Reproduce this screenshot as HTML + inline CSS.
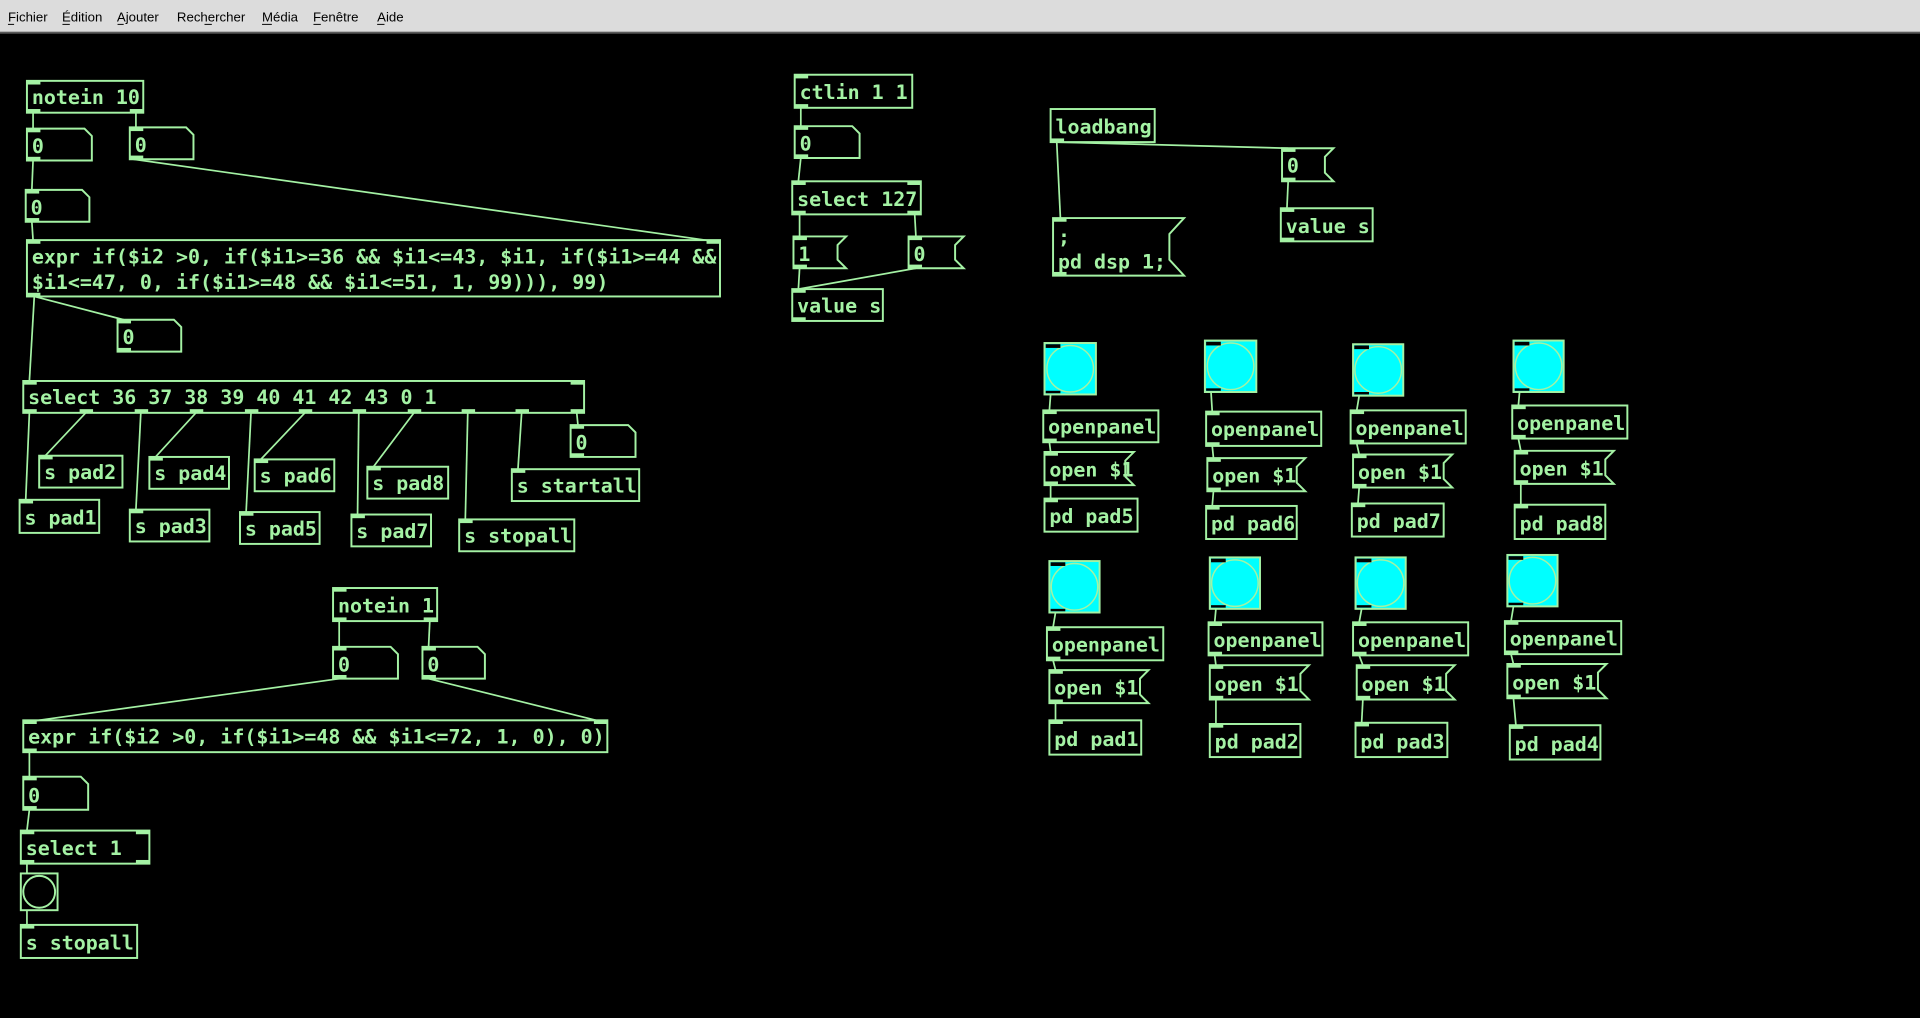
<!DOCTYPE html>
<html><head><meta charset="utf-8"><style>
html,body{margin:0;padding:0;background:#000;width:1920px;height:1018px;overflow:hidden}
svg{display:block}
.o{fill:none;stroke:#a4f2a4;stroke-width:1.6}
.c{fill:none;stroke:#a4f2a4;stroke-width:1.4}
.f{fill:#a4f2a4}
.t{fill:#a4f2a4;font-family:"DejaVu Sans Mono","Liberation Mono",monospace;font-weight:bold;font-size:16.3px}
.m{fill:#000;font-family:"Liberation Sans","DejaVu Sans",sans-serif;font-size:10.8px}
.bg{fill:#00ffff;stroke:#a4f2a4;stroke-width:1.6}
</style></head><body>
<svg width="1920" height="1018" viewBox="0 0 1568 831" preserveAspectRatio="none">
<rect x="0" y="0" width="1568" height="831" fill="#000"/>
<rect x="0" y="0" width="1568" height="26" fill="#dcdcdc"/>
<rect x="0" y="26" width="1568" height="1.5" fill="#5a5a5a"/>
<g class="m">
<text x="6.5" y="17.5">Fichier</text><text x="50.6" y="17.5">Édition</text><text x="95.5" y="17.5">Ajouter</text><text x="144.5" y="17.5">Rechercher</text><text x="214" y="17.5">Média</text><text x="255.6" y="17.5">Fenêtre</text><text x="308" y="17.5">Aide</text>
</g>
<g fill="#000"><rect x="6.5" y="19.5" width="5" height="0.8"/><rect x="51" y="19.5" width="6" height="0.8"/><rect x="96" y="19.5" width="5" height="0.8"/><rect x="167" y="19.5" width="6" height="0.8"/><rect x="214" y="19.5" width="8" height="0.8"/><rect x="256" y="19.5" width="6" height="0.8"/><rect x="308" y="19.5" width="6" height="0.8"/></g>

<g class="c">
<line x1="27" y1="92" x2="27" y2="105"/><line x1="111" y1="92" x2="111" y2="104"/>
<line x1="27" y1="131" x2="26" y2="155"/><line x1="26" y1="181" x2="27" y2="196"/>
<line x1="109" y1="130" x2="583" y2="197"/>
<line x1="28" y1="242" x2="101" y2="261"/><line x1="28" y1="242" x2="24" y2="311"/>
<line x1="24" y1="337" x2="21" y2="408"/><line x1="70" y1="337" x2="37" y2="372"/>
<line x1="115" y1="337" x2="111" y2="416"/><line x1="160" y1="337" x2="127" y2="373"/>
<line x1="205" y1="337" x2="201" y2="418"/><line x1="249" y1="337" x2="213" y2="375"/>
<line x1="293" y1="337" x2="292" y2="420"/><line x1="338" y1="337" x2="305" y2="381"/>
<line x1="382" y1="337" x2="380" y2="424"/><line x1="426" y1="337" x2="423" y2="383"/>
<line x1="471" y1="337" x2="472" y2="347"/>
<line x1="277" y1="507" x2="277" y2="528"/><line x1="351" y1="507" x2="350" y2="528"/>
<line x1="277" y1="554" x2="24" y2="589"/><line x1="350" y1="554" x2="491" y2="589"/>
<line x1="24" y1="614" x2="24" y2="634"/><line x1="24" y1="661" x2="22" y2="678"/>
<line x1="22" y1="705" x2="22" y2="713"/><line x1="22" y1="743" x2="22" y2="755"/>
<line x1="654" y1="88" x2="654" y2="103"/><line x1="654" y1="129" x2="652" y2="148"/>
<line x1="653" y1="175" x2="653" y2="193"/><line x1="747" y1="175" x2="748" y2="193"/>
<line x1="653" y1="219" x2="652" y2="236"/><line x1="748" y1="219" x2="652" y2="236"/>
<line x1="863" y1="116" x2="866" y2="178"/><line x1="863" y1="116" x2="1052" y2="121"/>
<line x1="1052" y1="148" x2="1051" y2="170"/>
<line x1="858" y1="322" x2="857" y2="335"/><line x1="857" y1="361" x2="858" y2="369"/><line x1="858" y1="396" x2="858" y2="407"/>
<line x1="989" y1="320" x2="990" y2="336"/><line x1="990" y1="364" x2="991" y2="374"/><line x1="991" y1="401" x2="990" y2="413"/>
<line x1="1110" y1="323" x2="1108" y2="335"/><line x1="1108" y1="362" x2="1110" y2="371"/><line x1="1110" y1="398" x2="1109" y2="411"/>
<line x1="1241" y1="320" x2="1240" y2="331"/><line x1="1240" y1="358" x2="1242" y2="368"/><line x1="1242" y1="395" x2="1242" y2="412"/>
<line x1="862" y1="500" x2="860" y2="512"/><line x1="860" y1="539" x2="862" y2="547"/><line x1="862" y1="574" x2="862" y2="588"/>
<line x1="993" y1="497" x2="992" y2="508"/><line x1="992" y1="535" x2="993" y2="543"/><line x1="993" y1="571" x2="993" y2="591"/>
<line x1="1112" y1="497" x2="1110" y2="508"/><line x1="1110" y1="535" x2="1113" y2="543"/><line x1="1113" y1="571" x2="1112" y2="590"/>
<line x1="1236" y1="495" x2="1234" y2="507"/><line x1="1234" y1="534" x2="1236" y2="542"/><line x1="1236" y1="570" x2="1238" y2="592"/>
</g>

<g class="o">
<rect x="22" y="66" width="95" height="26"/>
<rect x="22" y="196" width="566" height="46"/>
<rect x="19" y="311" width="458" height="26"/>
<rect x="32" y="372" width="68" height="26"/><rect x="122" y="373" width="65" height="26"/><rect x="208" y="375" width="65" height="26"/><rect x="300" y="381" width="66" height="26"/><rect x="418" y="383" width="104" height="26"/>
<rect x="16" y="408" width="65" height="27"/><rect x="106" y="416" width="65" height="26"/><rect x="196" y="418" width="65" height="26"/><rect x="287" y="420" width="65" height="26"/><rect x="375" y="424" width="94" height="26"/>
<rect x="272" y="480" width="85" height="27"/>
<rect x="19" y="588" width="477" height="26"/>
<rect x="17" y="678" width="105" height="27"/>
<rect x="17" y="713" width="30" height="30"/>
<circle cx="32" cy="728" r="13"/>
<rect x="17" y="755" width="95" height="27"/>
<rect x="649" y="61" width="96" height="27"/>
<rect x="647" y="148" width="105" height="27"/>
<rect x="647" y="236" width="74" height="26"/>
<rect x="858" y="89" width="85" height="27"/>
<rect x="1046" y="170" width="75" height="27"/>
<path d="M22,105H69L75,111V131H22Z"/><path d="M106,104H152L158,110V130H106Z"/><path d="M21,155H67L73,161V181H21Z"/>
<path d="M96,261H142L148,267V287H96Z"/><path d="M466,347H513L519,353V373H466Z"/>
<path d="M272,528H319L325,534V554H272Z"/><path d="M345,528H390L396,534V554H345Z"/>
<path d="M19,634H66L72,640V661H19Z"/><path d="M649,103H696L702,109V129H649Z"/>
<path d="M648,193H691L684,200V212L691,219H648Z"/><path d="M742,193H787L780,200V212L787,219H742Z"/>
<path d="M1047,121H1089L1082,128V141L1089,148H1047Z"/>
<path d="M860,178H967L955,191V212L967,225H860Z"/>
</g>
<g>
<rect class="bg" x="853" y="280" width="42" height="42"/><rect class="bg" x="984" y="278" width="42" height="42"/><rect class="bg" x="1105" y="281" width="41" height="42"/><rect class="bg" x="1236" y="278" width="41" height="42"/>
<rect class="bg" x="857" y="458" width="41" height="42"/><rect class="bg" x="988" y="455" width="41" height="42"/><rect class="bg" x="1107" y="455" width="41" height="42"/><rect class="bg" x="1231" y="453" width="41" height="42"/>
</g>
<g fill="none" stroke="#a4f2a4" stroke-width="1.2">
<circle cx="874" cy="301" r="19"/><circle cx="1005" cy="299" r="19"/><circle cx="1125.5" cy="302" r="19"/><circle cx="1256.5" cy="299" r="19"/>
<circle cx="877.5" cy="479" r="19"/><circle cx="1008.5" cy="476" r="19"/><circle cx="1127.5" cy="476" r="19"/><circle cx="1251.5" cy="474" r="19"/>
</g>
<g fill="#000">
<rect x="854" y="281" width="12" height="3"/><rect x="854" y="319" width="12" height="2"/>
<rect x="985" y="279" width="12" height="3"/><rect x="985" y="317" width="12" height="2"/>
<rect x="1106" y="282" width="12" height="3"/><rect x="1106" y="320" width="12" height="2"/>
<rect x="1237" y="279" width="12" height="3"/><rect x="1237" y="317" width="12" height="2"/>
<rect x="858" y="459" width="12" height="3"/><rect x="858" y="497" width="12" height="2"/>
<rect x="989" y="456" width="12" height="3"/><rect x="989" y="494" width="12" height="2"/>
<rect x="1108" y="456" width="12" height="3"/><rect x="1108" y="494" width="12" height="2"/>
<rect x="1232" y="454" width="12" height="3"/><rect x="1232" y="492" width="12" height="2"/>
</g>
<g class="o">
<rect x="852" y="335" width="94" height="26"/><path d="M853,369H926L919,376V389L926,396H853Z"/><rect x="853" y="407" width="76" height="27"/>
<rect x="985" y="336" width="94" height="28"/><path d="M986,374H1066L1059,381V394L1066,401H986Z"/><rect x="985" y="413" width="74" height="27"/>
<rect x="1103" y="335" width="94" height="27"/><path d="M1105,371H1186L1179,378V391L1186,398H1105Z"/><rect x="1104" y="411" width="75" height="27"/>
<rect x="1235" y="331" width="94" height="27"/><path d="M1237,368H1318L1311,375V388L1318,395H1237Z"/><rect x="1237" y="412" width="74" height="28"/>
<rect x="855" y="512" width="95" height="27"/><path d="M857,547H938L931,554V567L938,574H857Z"/><rect x="857" y="588" width="75" height="28"/>
<rect x="987" y="508" width="93" height="27"/><path d="M988,543H1069L1062,550V564L1069,571H988Z"/><rect x="988" y="591" width="74" height="27"/>
<rect x="1105" y="508" width="94" height="27"/><path d="M1108,543H1188L1181,550V564L1188,571H1108Z"/><rect x="1107" y="590" width="75" height="28"/>
<rect x="1229" y="507" width="95" height="27"/><path d="M1231,542H1312L1305,549V563L1312,570H1231Z"/><rect x="1233" y="592" width="74" height="28"/>
</g>

<g class="f">
<rect x="22" y="66" width="11" height="3"/><rect x="22" y="89" width="11" height="3"/><rect x="106" y="89" width="11" height="3"/>
<rect x="22" y="105" width="11" height="3"/><rect x="22" y="128" width="11" height="3"/><rect x="106" y="104" width="11" height="3"/><rect x="106" y="127" width="11" height="3"/>
<rect x="21" y="155" width="11" height="3"/><rect x="21" y="178" width="11" height="3"/>
<rect x="22" y="196" width="11" height="3"/><rect x="577" y="196" width="11" height="3"/><rect x="22" y="239" width="11" height="3"/>
<rect x="96" y="261" width="11" height="3"/><rect x="96" y="284" width="11" height="3"/>
<rect x="19" y="311" width="11" height="3"/><rect x="466" y="311" width="11" height="3"/>
<rect x="19" y="334" width="11" height="3"/><rect x="65" y="334" width="11" height="3"/><rect x="110" y="334" width="11" height="3"/><rect x="155" y="334" width="11" height="3"/><rect x="200" y="334" width="11" height="3"/><rect x="244" y="334" width="11" height="3"/><rect x="288" y="334" width="11" height="3"/><rect x="333" y="334" width="11" height="3"/><rect x="377" y="334" width="11" height="3"/><rect x="421" y="334" width="11" height="3"/><rect x="466" y="334" width="11" height="3"/>
<rect x="466" y="347" width="11" height="3"/><rect x="466" y="370" width="11" height="3"/>
<rect x="32" y="372" width="11" height="3"/><rect x="122" y="373" width="11" height="3"/><rect x="208" y="375" width="11" height="3"/><rect x="300" y="381" width="11" height="3"/><rect x="418" y="383" width="11" height="3"/>
<rect x="16" y="408" width="11" height="3"/><rect x="106" y="416" width="11" height="3"/><rect x="196" y="418" width="11" height="3"/><rect x="287" y="420" width="11" height="3"/><rect x="375" y="424" width="11" height="3"/>
<rect x="272" y="480" width="11" height="3"/><rect x="272" y="504" width="11" height="3"/><rect x="346" y="504" width="11" height="3"/>
<rect x="272" y="528" width="11" height="3"/><rect x="272" y="551" width="11" height="3"/><rect x="345" y="528" width="11" height="3"/><rect x="345" y="551" width="11" height="3"/>
<rect x="19" y="588" width="11" height="3"/><rect x="485" y="588" width="11" height="3"/><rect x="19" y="611" width="11" height="3"/>
<rect x="19" y="634" width="11" height="3"/><rect x="19" y="658" width="11" height="3"/>
<rect x="17" y="678" width="11" height="3"/><rect x="111" y="678" width="11" height="3"/><rect x="17" y="702" width="11" height="3"/><rect x="111" y="702" width="11" height="3"/>
<rect x="17" y="755" width="11" height="3"/>
<rect x="649" y="61" width="11" height="3"/><rect x="649" y="85" width="11" height="3"/>
<rect x="649" y="103" width="11" height="3"/><rect x="649" y="126" width="11" height="3"/>
<rect x="647" y="148" width="11" height="3"/><rect x="741" y="148" width="11" height="3"/><rect x="647" y="172" width="11" height="3"/><rect x="741" y="172" width="11" height="3"/>
<rect x="648" y="193" width="11" height="3"/><rect x="648" y="216" width="11" height="3"/><rect x="742" y="193" width="11" height="3"/><rect x="742" y="216" width="11" height="3"/>
<rect x="647" y="236" width="11" height="3"/><rect x="647" y="259" width="11" height="3"/>
<rect x="858" y="113" width="11" height="3"/><rect x="860" y="178" width="11" height="3"/><rect x="860" y="222" width="11" height="3"/>
<rect x="1047" y="121" width="11" height="3"/><rect x="1047" y="145" width="11" height="3"/><rect x="1046" y="170" width="11" height="3"/><rect x="1046" y="194" width="11" height="3"/>
<rect x="852" y="335" width="11" height="3"/><rect x="852" y="358" width="11" height="3"/><rect x="853" y="369" width="11" height="3"/><rect x="853" y="393" width="11" height="3"/><rect x="853" y="407" width="11" height="3"/>
<rect x="985" y="336" width="11" height="3"/><rect x="985" y="361" width="11" height="3"/><rect x="986" y="374" width="11" height="3"/><rect x="986" y="398" width="11" height="3"/><rect x="985" y="413" width="11" height="3"/>
<rect x="1103" y="335" width="11" height="3"/><rect x="1103" y="359" width="11" height="3"/><rect x="1105" y="371" width="11" height="3"/><rect x="1105" y="395" width="11" height="3"/><rect x="1104" y="411" width="11" height="3"/>
<rect x="1235" y="331" width="11" height="3"/><rect x="1235" y="355" width="11" height="3"/><rect x="1237" y="368" width="11" height="3"/><rect x="1237" y="392" width="11" height="3"/><rect x="1237" y="412" width="11" height="3"/>
<rect x="855" y="512" width="11" height="3"/><rect x="855" y="536" width="11" height="3"/><rect x="857" y="547" width="11" height="3"/><rect x="857" y="571" width="11" height="3"/><rect x="857" y="588" width="11" height="3"/>
<rect x="987" y="508" width="11" height="3"/><rect x="987" y="532" width="11" height="3"/><rect x="988" y="543" width="11" height="3"/><rect x="988" y="568" width="11" height="3"/><rect x="988" y="591" width="11" height="3"/>
<rect x="1105" y="508" width="11" height="3"/><rect x="1105" y="532" width="11" height="3"/><rect x="1108" y="543" width="11" height="3"/><rect x="1108" y="568" width="11" height="3"/><rect x="1107" y="590" width="11" height="3"/>
<rect x="1229" y="507" width="11" height="3"/><rect x="1229" y="531" width="11" height="3"/><rect x="1231" y="542" width="11" height="3"/><rect x="1231" y="567" width="11" height="3"/><rect x="1233" y="592" width="11" height="3"/>
</g>

<g class="t">
<text x="26" y="85">notein 10</text>
<text x="26" y="125">0</text><text x="110" y="124">0</text><text x="25" y="175">0</text>
<text x="26" y="215">expr if($i2 &gt;0, if($i1&gt;=36 &amp;&amp; $i1&lt;=43, $i1, if($i1&gt;=44 &amp;&amp;</text>
<text x="26" y="236">$i1&lt;=47, 0, if($i1&gt;=48 &amp;&amp; $i1&lt;=51, 1, 99))), 99)</text>
<text x="100" y="281">0</text>
<text x="23" y="330">select 36 37 38 39 40 41 42 43 0 1</text>
<text x="470" y="367">0</text>
<text x="36" y="391">s pad2</text><text x="126" y="392">s pad4</text><text x="212" y="394">s pad6</text><text x="304" y="400">s pad8</text><text x="422" y="402">s startall</text>
<text x="20" y="428">s pad1</text><text x="110" y="435">s pad3</text><text x="200" y="437">s pad5</text><text x="291" y="439">s pad7</text><text x="379" y="443">s stopall</text>
<text x="276" y="500">notein 1</text>
<text x="276" y="548">0</text><text x="349" y="548">0</text>
<text x="23" y="607">expr if($i2 &gt;0, if($i1&gt;=48 &amp;&amp; $i1&lt;=72, 1, 0), 0)</text>
<text x="23" y="655">0</text>
<text x="21" y="698">select 1</text>
<text x="21" y="775">s stopall</text>
<text x="653" y="81">ctlin 1 1</text>
<text x="653" y="123">0</text>
<text x="651" y="168">select 127</text>
<text x="652" y="213">1</text><text x="746" y="213">0</text>
<text x="651" y="255">value s</text>
<text x="862" y="109">loadbang</text>
<text x="1051" y="141">0</text>
<text x="1050" y="190">value s</text>
<text x="864" y="199">;</text><text x="864" y="219">pd dsp 1;</text>
<text x="856" y="354">openpanel</text><text x="857" y="389">open $1</text><text x="857" y="427">pd pad5</text>
<text x="989" y="356">openpanel</text><text x="990" y="394">open $1</text><text x="989" y="433">pd pad6</text>
<text x="1107" y="355">openpanel</text><text x="1109" y="391">open $1</text><text x="1108" y="431">pd pad7</text>
<text x="1239" y="351">openpanel</text><text x="1241" y="388">open $1</text><text x="1241" y="433">pd pad8</text>
<text x="859" y="532">openpanel</text><text x="861" y="567">open $1</text><text x="861" y="609">pd pad1</text>
<text x="991" y="528">openpanel</text><text x="992" y="564">open $1</text><text x="992" y="611">pd pad2</text>
<text x="1109" y="528">openpanel</text><text x="1112" y="564">open $1</text><text x="1111" y="611">pd pad3</text>
<text x="1233" y="527">openpanel</text><text x="1235" y="563">open $1</text><text x="1237" y="613">pd pad4</text>
</g>
</svg>
</body></html>
